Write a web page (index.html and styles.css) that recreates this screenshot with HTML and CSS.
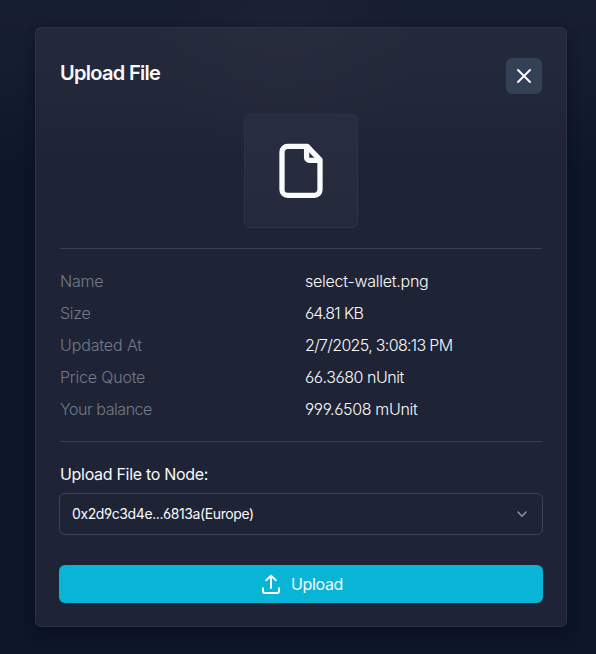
FILE: index.html
```html
<!DOCTYPE html>
<html lang="en">
<head>
<meta charset="utf-8">
<title>Upload File</title>
<link rel="stylesheet" href="styles.css">
</head>
<body>
<main class="dialog">
  <header class="head">
    <h1 class="title">Upload File</h1>
    <button class="close" aria-label="Close">
      <svg width="16" height="16" viewBox="0 0 16 16" fill="none" stroke="currentColor" stroke-width="2" stroke-linecap="round"><path d="M2 2l12 12M14 2L2 14"/></svg>
    </button>
  </header>
  <div class="preview">
    <svg width="64" height="64" viewBox="0 0 64 64" fill="none" stroke="currentColor" stroke-width="5.3" stroke-linejoin="round"><path d="M38.2 7.4H18.5a5.5 5.5 0 0 0-5.5 5.5v37.9a5.5 5.5 0 0 0 5.5 5.5h27a5.5 5.5 0 0 0 5.5-5.5V20.8Z"/><path d="M37.6 8v10.5a2.8 2.8 0 0 0 2.8 2.8H50"/></svg>
  </div>
  <dl class="details">
    <dt class="k-name">Name</dt><dd class="v-name">select-wallet.png</dd>
    <dt class="k-size">Size</dt><dd class="v-size">64.81 KB</dd>
    <dt class="k-date">Updated At</dt><dd class="v-date">2/7/2025, 3:08:13 PM</dd>
    <dt class="k-price">Price Quote</dt><dd class="v-price">66.3680 nUnit</dd>
    <dt class="k-balance">Your balance</dt><dd class="v-balance">999.6508 mUnit</dd>
  </dl>
  <div class="label"><span>Upload File to Node:</span></div>
  <div class="select">
    <span class="node">0x2d9c3d4e...6813a(Europe)</span>
    <svg width="16" height="16" viewBox="0 0 16 16" fill="none" stroke="currentColor" stroke-width="1.4" stroke-linecap="round" stroke-linejoin="round"><path d="M4 6l4 4.3L12 6"/></svg>
  </div>
  <button class="upload">
    <svg width="20" height="20" viewBox="0 0 20 20" fill="none" stroke="currentColor" stroke-width="2" stroke-linecap="round" stroke-linejoin="round"><path d="M10 14V1.8M5.2 6.3L10 1.6l4.8 4.7M2 14.3v2.9a1.8 1.8 0 0 0 1.8 1.8h12.4a1.8 1.8 0 0 0 1.8-1.8v-2.9"/></svg>
    <span>Upload</span>
  </button>
</main>
</body>
</html>
```
FILE: styles.css
```css
* { box-sizing: border-box; }

body {
  margin: 0;
  height: 654px;
  padding: 27px 29px 27px 35px;
  overflow: hidden;
  font: 300 16px/24px Inter, "Liberation Sans", sans-serif;
  font-feature-settings: "cv03", "cv04";
  color: #f8fafc;
  background:
    radial-gradient(circle at 285px 30px, rgba(42, 43, 61, .3), transparent 120px),
    linear-gradient(180deg, #171e31 0, #151d30 60px, #0e172a 170px, #0e172a 100%);
}

.dialog {
  height: 600px;
  padding: 30px 23px 23px;
  border: 1px solid #2d3242;
  border-radius: 6px;
  background:
    radial-gradient(circle at 250px 0, rgba(46, 50, 66, .35), transparent 140px),
    linear-gradient(180deg, #242a3b 0, #222739 60px, #1e2436 130px, #1e2335 100%);
  box-shadow: 0 10px 15px -3px rgba(8, 10, 32, .35), 0 4px 12px rgba(8, 10, 32, .2);
}

.head {
  display: flex;
  justify-content: space-between;
  margin: 0 1px;
  height: 56px;
}

.title {
  margin: 0;
  font-size: 20px;
  line-height: 30px;
  font-weight: 600;
  letter-spacing: -.7px;
}

.close {
  display: grid;
  place-items: center;
  width: 36px;
  height: 36px;
  padding: 0;
  border: 0;
  border-radius: 6px;
  color: #f8fafc;
  background: #334155;
}

.preview {
  display: grid;
  place-items: center;
  width: 114px;
  height: 114px;
  margin: 0 0 20px 185px;
  border: 1px solid #2f3445;
  border-radius: 6px;
  background: linear-gradient(#282d3f, #242a3c);
}

.details {
  display: grid;
  grid-template-columns: 245px 1fr;
  grid-auto-rows: 24px;
  row-gap: 8px;
  height: 194px;
  margin: 0 1px 20px;
  padding-top: 20px;
  border-top: 1px solid #334155;
  border-bottom: 1px solid #334155;
  white-space: nowrap;
}

dt { color: #737a87; }
dd { margin: 0; }

.k-name, .k-size, .v-name { letter-spacing: -.25px; }
.k-date { letter-spacing: -.12px; }
.k-price { letter-spacing: -.2px; }
.k-balance { letter-spacing: -.45px; }
.v-size { letter-spacing: -.85px; word-spacing: .6px; }
.v-date { letter-spacing: -.67px; }
.v-price { letter-spacing: -.45px; }
.v-balance { letter-spacing: -.34px; }

.label {
  margin: 0 1px 7px;
  font-weight: 400;
  letter-spacing: -.31px;
}

.select {
  display: flex;
  align-items: center;
  justify-content: space-between;
  height: 42px;
  margin-bottom: 30px;
  padding: 0 12px;
  border: 1px solid #3e4353;
  border-radius: 6px;
  font-size: 14px;
  font-weight: 400;
  letter-spacing: -.4px;
}

.select svg { color: #9499a5; }

.upload {
  display: flex;
  align-items: center;
  justify-content: center;
  gap: 10px;
  width: 100%;
  height: 38px;
  padding: 0 0 0 2px;
  border: 0;
  border-radius: 6px;
  font: 400 16px/24px Inter, "Liberation Sans", sans-serif;
  letter-spacing: -.35px;
  color: #f8fafc;
  background: #08b5d6;
}
```
